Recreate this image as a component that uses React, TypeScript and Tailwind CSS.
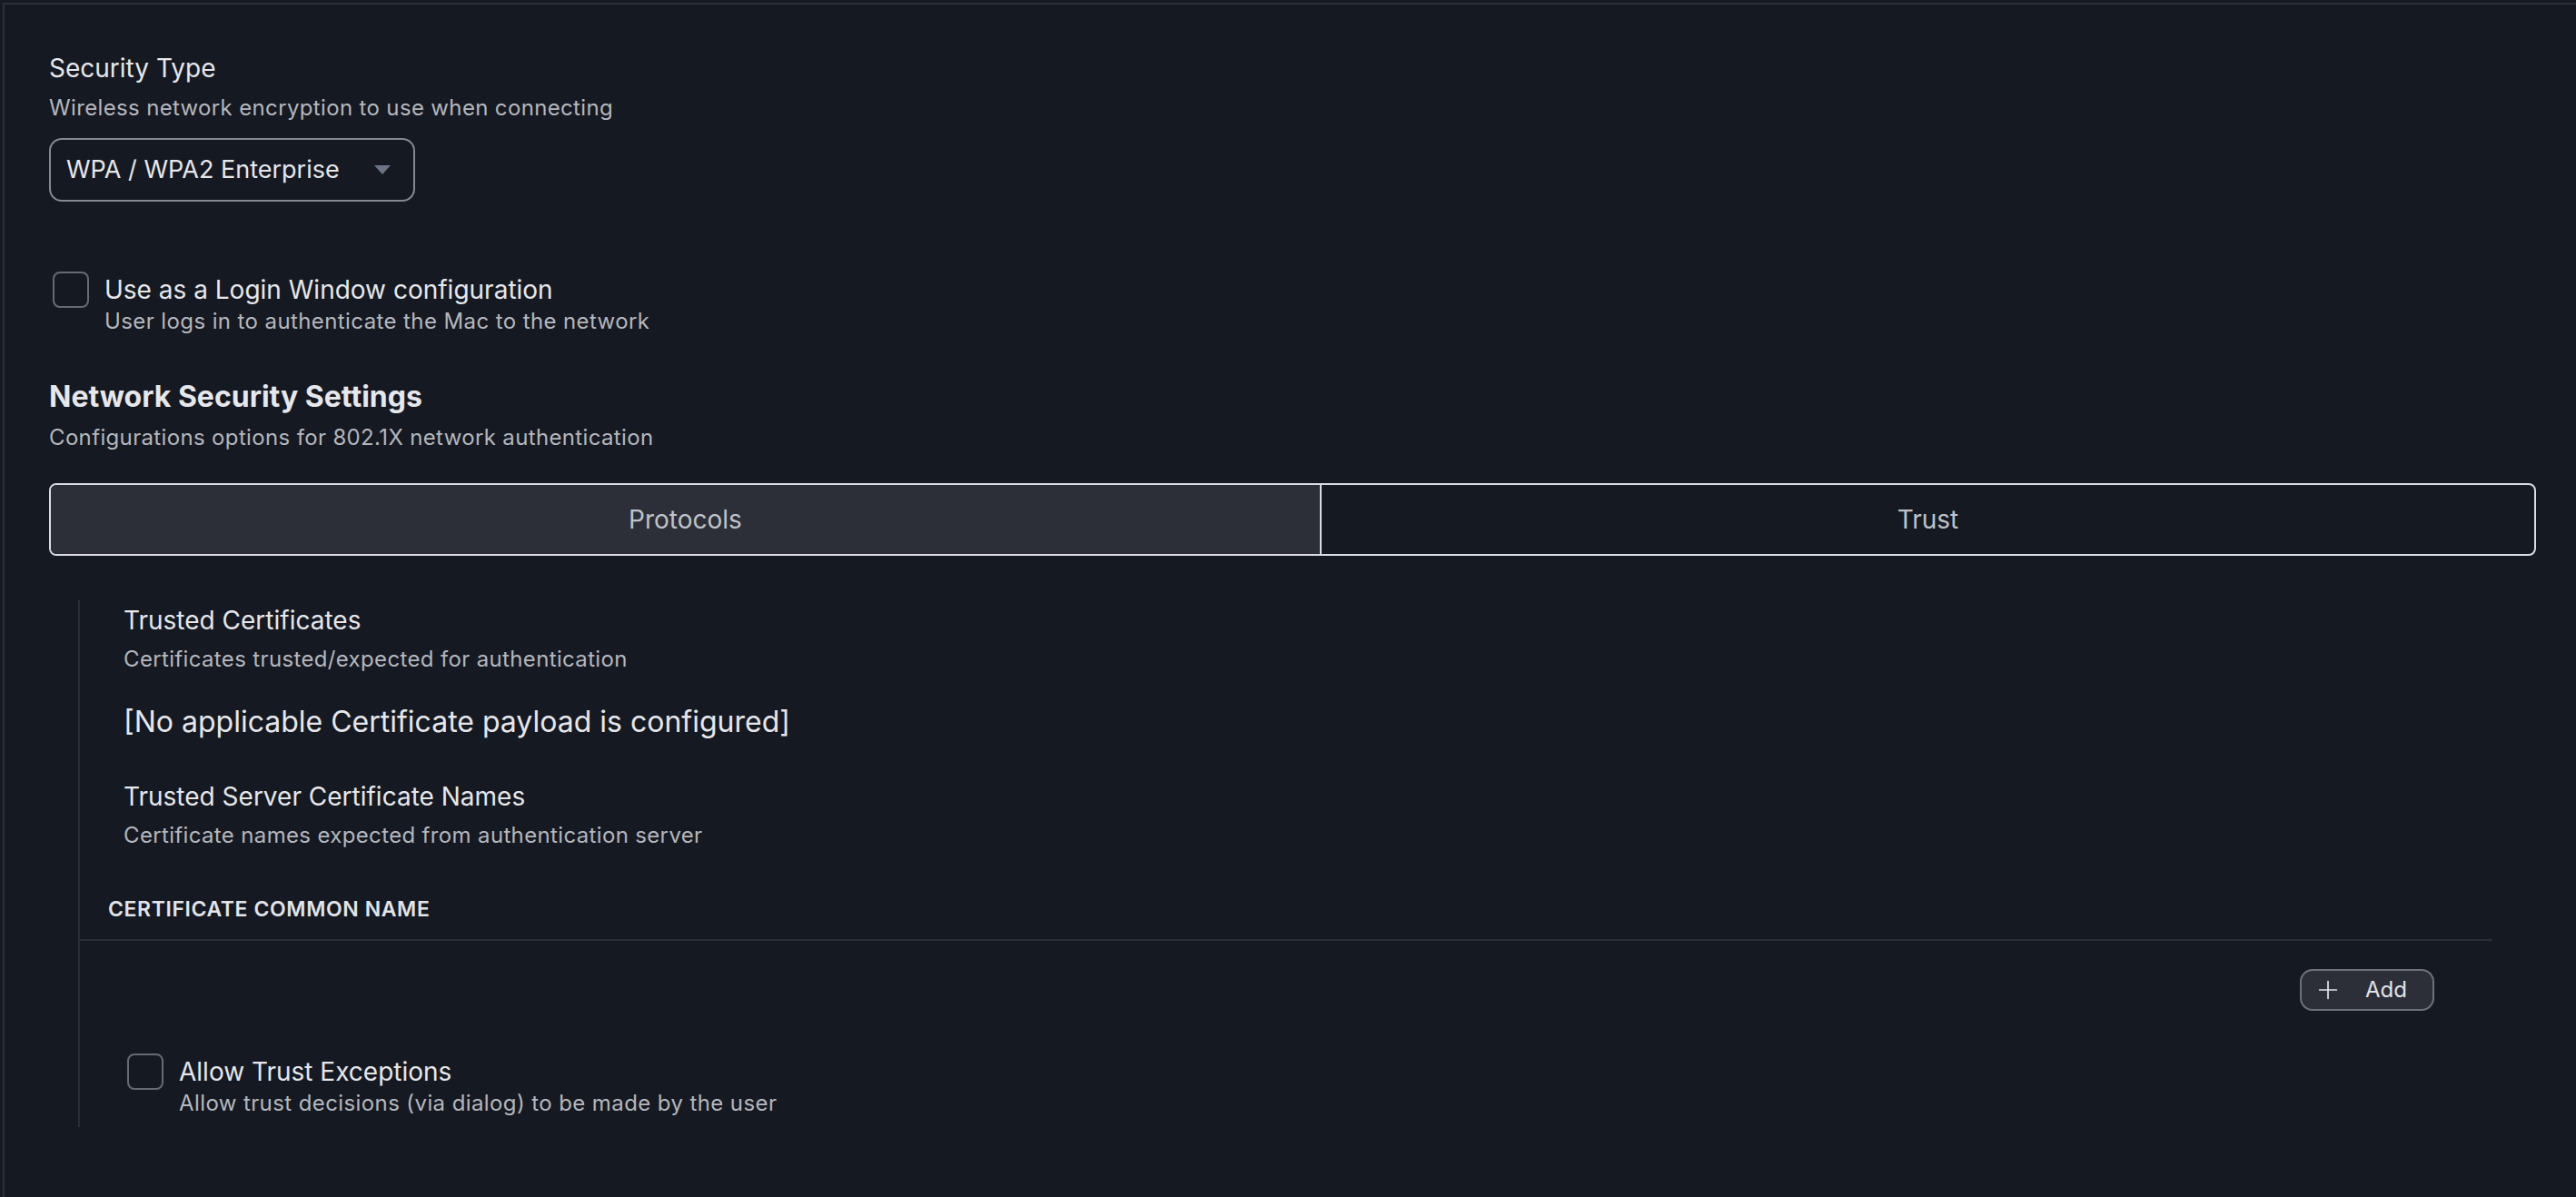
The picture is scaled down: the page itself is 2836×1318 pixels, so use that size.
import { Plus } from "lucide-react";

function Checkbox() {
  return <div className="w-[40px] h-[40px] shrink-0 rounded-[8px] border-2 border-[#666a72]" />;
}

function CheckRow({ label, hint, className }: { label: string; hint: string; className?: string }) {
  return (
    <div className={"flex items-start gap-[17px] " + (className ?? "")}>
      <Checkbox />
      <div className="mt-[2px]">
        <div className="text-[28px] leading-[36px] text-[#e6e7ea]">{label}</div>
        <div className="mt-[1px] text-[24px] leading-[32px] tracking-[0.4px] text-[#b4b7bd]">{hint}</div>
      </div>
    </div>
  );
}

export default function App() {
  return (
    <div
      className="w-full h-[1318px] bg-[#151921] pt-[3px] pl-[3px] overflow-hidden"
      style={{ fontFamily: "Inter, 'Noto Sans', sans-serif" }}
    >
      <div className="h-full border-t-2 border-l-2 border-[#2b2f37] pl-[49px] pr-[44px] pt-[52px]">
        {/* security type */}
        <div className="text-[28px] leading-[36px] text-[#e6e7ea]">Security Type</div>
        <div className="mt-[10px] text-[24px] leading-[32px] tracking-[0.35px] text-[#b4b7bd]">
          Wireless network encryption to use when connecting
        </div>
        <div className="mt-[17px] w-[403px] h-[70px] rounded-[14px] border-2 border-[#85888f] flex items-center justify-between pl-[17px] pr-[25px]">
          <span className="text-[27px] text-[#e6e7ea]">WPA / WPA2 Enterprise</span>
          <svg width="18" height="10" viewBox="0 0 18 10">
            <path d="M0 0 H18 L9 10 Z" fill="#6b7483" />
          </svg>
        </div>

        <CheckRow
          className="mt-[77px] ml-[4px]"
          label="Use as a Login Window configuration"
          hint="User logs in to authenticate the Mac to the network"
        />

        {/* network security */}
        <div className="mt-[49px] text-[32px] leading-[36px] font-bold text-[#e6e7ea]">Network Security Settings</div>
        <div className="mt-[11px] text-[24px] leading-[32px] tracking-[0.35px] text-[#b4b7bd]">
          Configurations options for 802.1X network authentication
        </div>

        <div className="mt-[34px] h-[80px] flex rounded-[8px] border-2 border-[#d9dbe0] overflow-hidden">
          <div className="w-[1397px] bg-[#2c2f38] flex items-center justify-center text-[28px] text-[#bfc2c8]">
            Protocols
          </div>
          <div className="flex-1 border-l-2 border-[#d9dbe0] flex items-center justify-center text-[28px] text-[#bfc2c8]">
            Trust
          </div>
        </div>

        {/* trust panel */}
        <div className="mt-[49px] ml-[32px] mr-[2px] border-l-2 border-[#2a2e36] pt-[4px] pb-[10px]">
          <div className="pl-[48px] pr-[46px]">
            <div className="text-[28px] leading-[36px] text-[#e6e7ea]">Trusted Certificates</div>
            <div className="mt-[9px] text-[24px] leading-[32px] tracking-[0.35px] text-[#b4b7bd]">
              Certificates trusted/expected for authentication
            </div>
            <div className="mt-[33px] text-[32px] leading-[40px] text-[#e6e7ea]">
              [No applicable Certificate payload is configured]
            </div>
            <div className="mt-[44px] text-[28px] leading-[36px] text-[#e6e7ea]">Trusted Server Certificate Names</div>
            <div className="mt-[9px] text-[24px] leading-[32px] tracking-[0.35px] text-[#b4b7bd]">
              Certificate names expected from authentication server
            </div>
          </div>

          <div className="mt-[51px] mr-[46px] border-b-2 border-[#2a2e36] pl-[31px] pb-[19px]">
            <div className="text-[23px] leading-[28px] font-semibold tracking-[0.6px] text-[#e2e4e8]">
              CERTIFICATE COMMON NAME
            </div>
          </div>

          <div className="mt-[31px] mr-[110px] flex justify-end">
            <button className="h-[46px] w-[148px] rounded-[14px] border-2 border-[#6e7178] bg-[#2c2f38] flex items-center pl-[13px] text-[#e2e4e8]">
              <Plus size={32} strokeWidth={1.3} />
              <span className="ml-[25px] text-[24px]">Add</span>
            </button>
          </div>

          <CheckRow
            className="mt-[47px] ml-[52px]"
            label="Allow Trust Exceptions"
            hint="Allow trust decisions (via dialog) to be made by the user"
          />
        </div>
      </div>
    </div>
  );
}
